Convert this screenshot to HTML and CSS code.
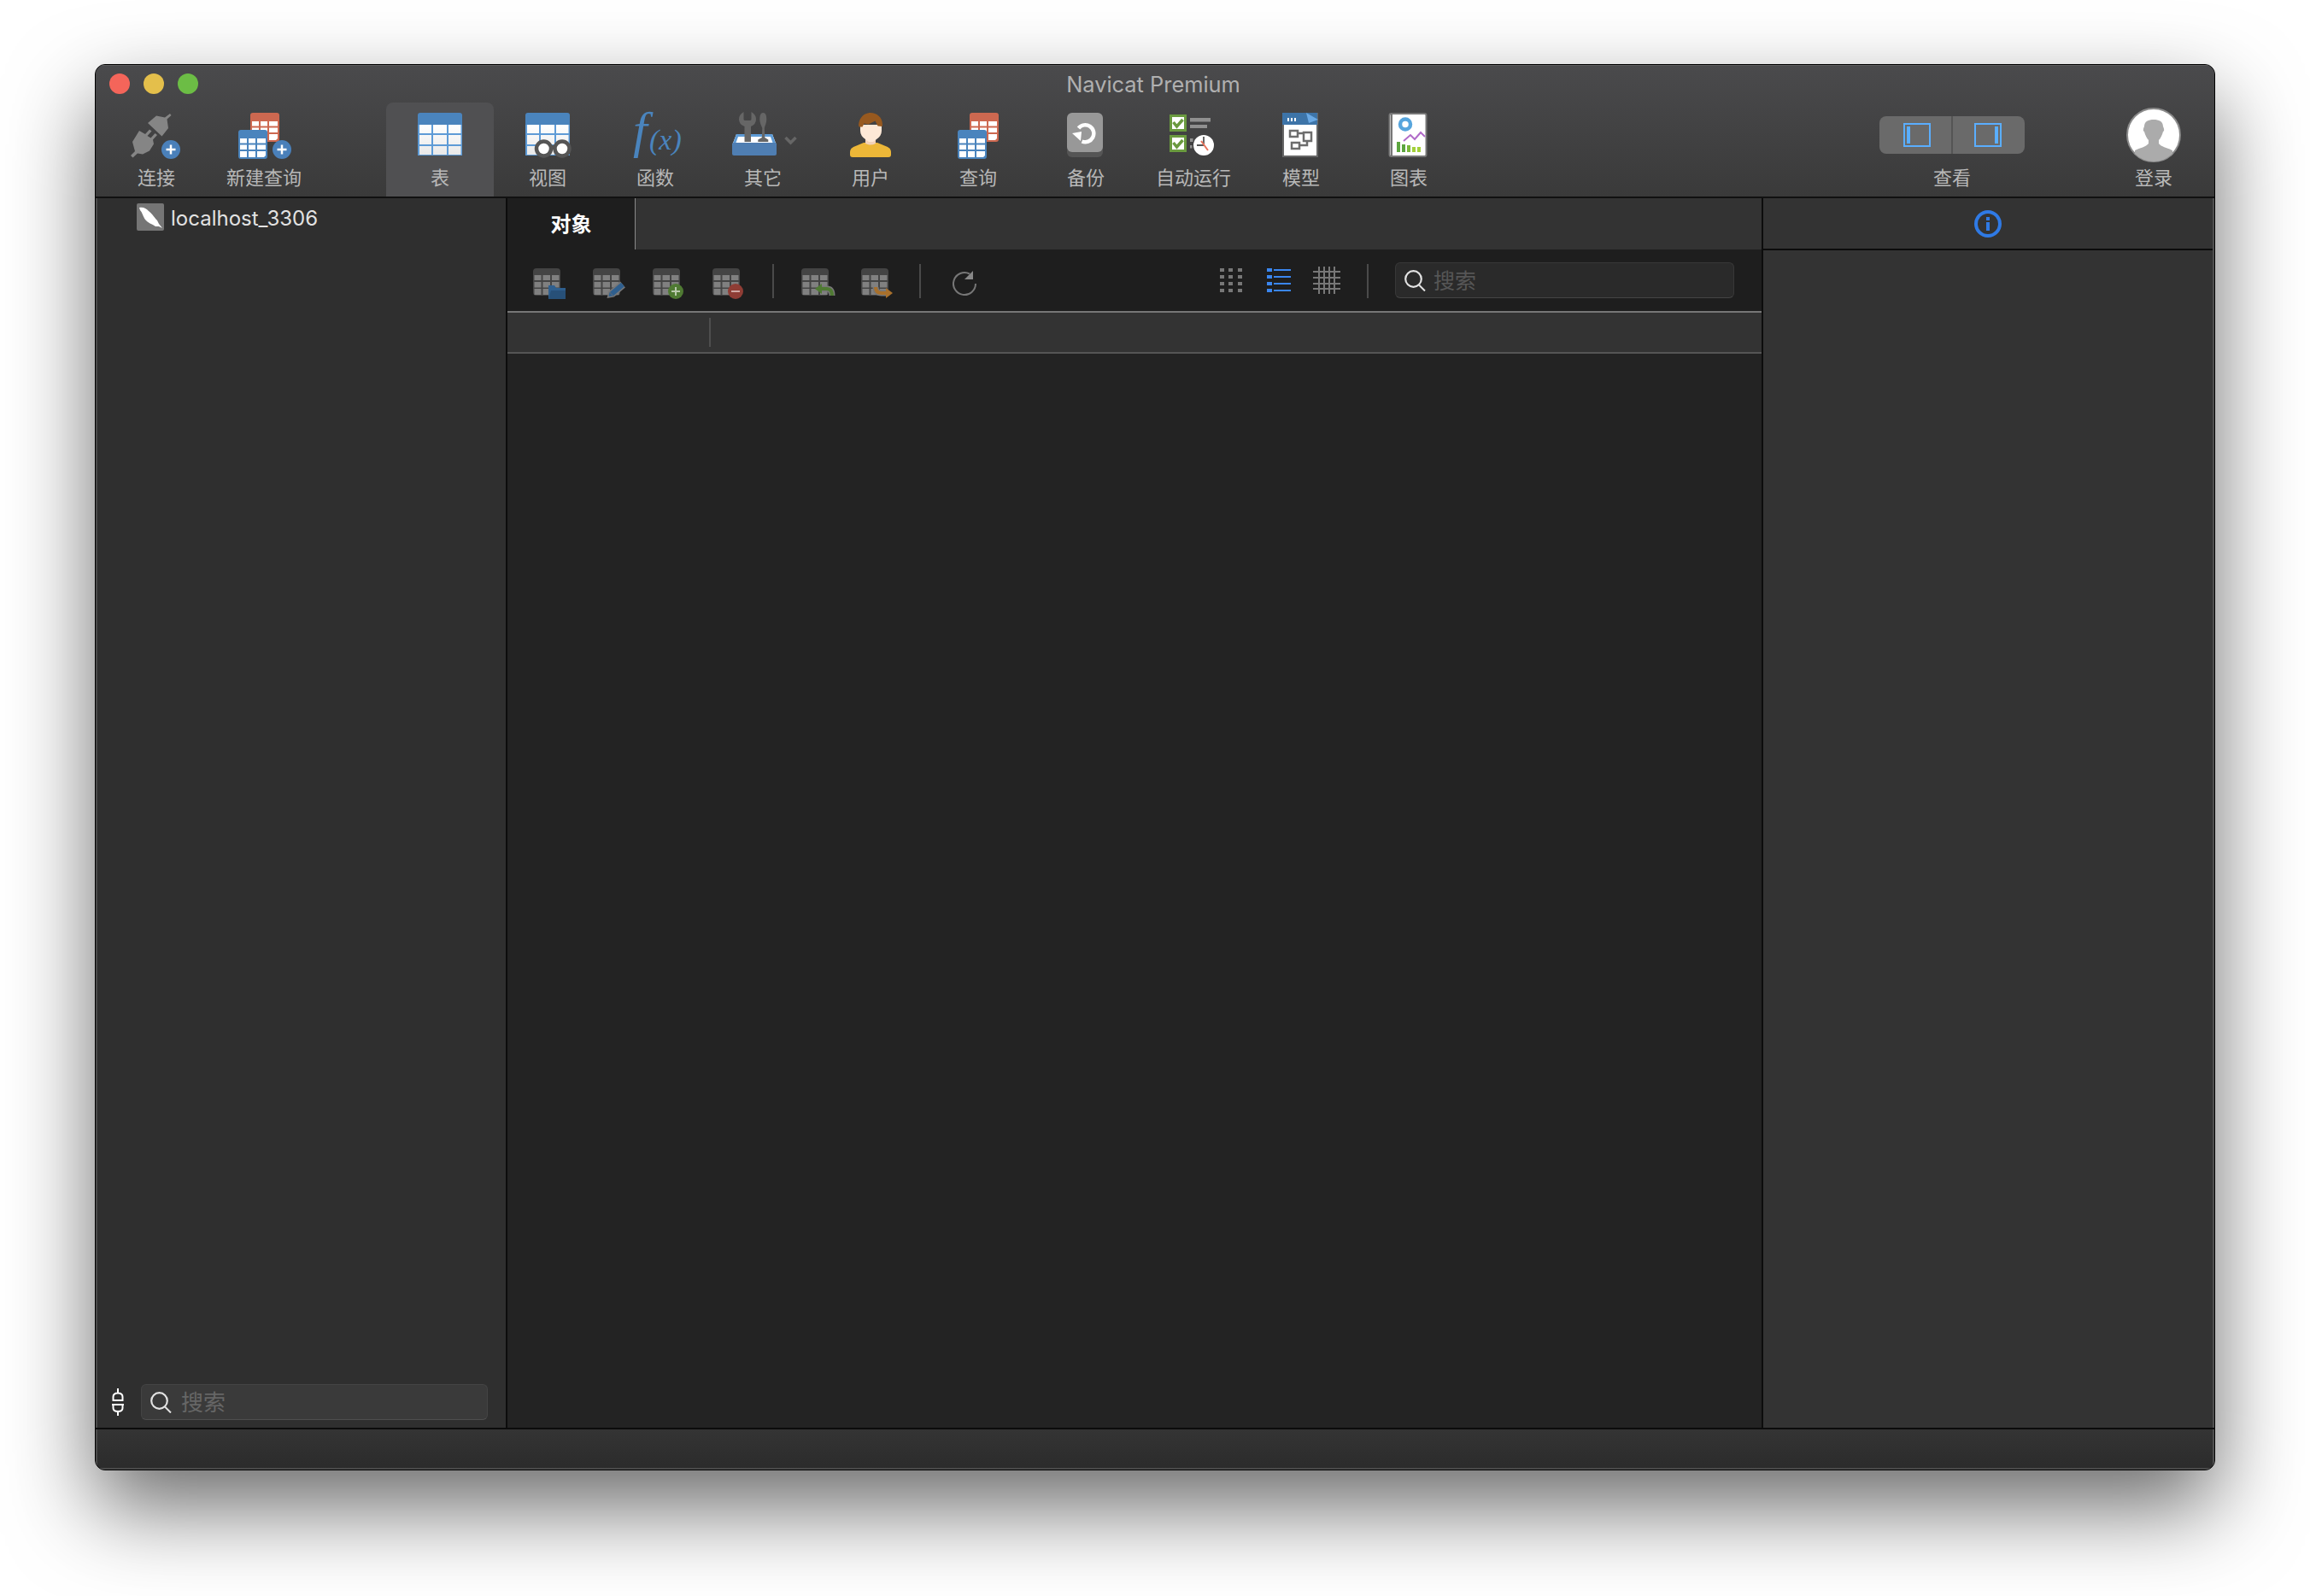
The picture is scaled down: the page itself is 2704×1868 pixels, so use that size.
FILE: index.html
```html
<!DOCTYPE html>
<html lang="zh-CN">
<head>
<meta charset="utf-8">
<title>Navicat Premium</title>
<link rel="stylesheet" href="styles.css">
</head>
<body>
<svg class="sprite" width="0" height="0">
  <defs>
    <symbol id="tbl-blue" viewBox="0 0 34 34">
      <rect width="34" height="34" rx="3" fill="#4a84bd"/>
      <path fill="#fff" d="M2 10h8v5.500H2zM12 10h8v5.500h-8zM22 10h10v5.500H22zM2 17.500h8V23H2zM12 17.500h8V23h-8zM22 17.500h10V23H22zM2 25h8v7H2zM12 25h8v7h-8zM22 25h10v5l-2 2h-8z"/>
    </symbol>
    <symbol id="tbl-red" viewBox="0 0 34 34">
      <rect width="34" height="34" rx="3" fill="#cd6850"/>
      <path fill="#fff" d="M2 10h8v5.500H2zM12 10h8v5.500h-8zM22 10h10v5.500H22zM2 17.500h8V23H2zM12 17.500h8V23h-8zM22 17.500h10V23H22zM2 25h8v7H2zM12 25h8v7h-8zM22 25h10v5l-2 2h-8z"/>
    </symbol>
    <linearGradient id="cell-fade" x1="0" y1="0" x2="0" y2="1">
      <stop offset="0" stop-color="#fff"/>
      <stop offset="1" stop-color="#e9e9e9"/>
    </linearGradient>
    <symbol id="tbl-big" viewBox="0 0 52 50">
      <rect width="52" height="50" rx="3" fill="#4a84bd"/>
      <rect y="14" width="52" height="36" fill="#5e9bd6"/>
      <path fill="url(#cell-fade)" d="M2 14h14v10H2zM18 14h16v10H18zM36 14h14.500v10H36zM2 26h14v11H2zM18 26h16v11H18zM36 26h14.500v11H36zM2 39h14v10H2zM18 39h16v10H18zM36 39h14.500v10H36z"/>
    </symbol>
    <symbol id="tbl-grey" viewBox="0 0 32 32">
      <rect width="32" height="32" rx="4" fill="#444"/>
      <path fill="#808080" d="M1.500 8h8v6h-8zM11.500 8H20v6h-8.500zM22 8h8.500v6H22zM1.500 16h8v6.500h-8zM11.500 16H20v6.500h-8.500zM22 16h8.500v6.500H22zM1.500 24h8v7h-8zM11.500 24H20v7h-8.500zM22 24h8.500v7H22z"/>
    </symbol>
    <symbol id="glass" viewBox="0 0 25 25">
      <circle cx="10.500" cy="10.500" r="9.300" fill="none" stroke="#e2e2e2" stroke-width="2.200"/>
      <path d="M17 17.500l7 7" stroke="#e2e2e2" stroke-width="2" fill="none"/>
    </symbol>
  </defs>
</svg>

<div class="window">
  <header class="chrome">
    <div class="titlebar">
      <div class="lights">
        <span class="light light-red"></span>
        <span class="light light-yellow"></span>
        <span class="light light-green"></span>
      </div>
      <div class="title">Navicat Premium</div>
    </div>
    <div class="toolbar">
      <div class="tool-group">
        <div class="tool">
          <svg viewBox="133 128 100 66">
            <path fill="#858585" d="M173 144l10-8.500 10 2 6-4.500 1.500 2-5 4.500 1.500 10.500-7.500 9.500z"/>
            <path fill="#858585" d="M155 166l8-13 7 4 5-5.500 2.500 2-5 5.500 4 2.500 5-5.500 2.500 2-5 5.500 1 5-5 8-8 4-6-1-5.500 5-2.500-2.500 5-5z"/>
            <circle cx="200" cy="175" r="11" fill="#4a80ba"/>
            <path d="M200 169.500v11M194.500 175h11" stroke="#fff" stroke-width="2.500"/>
          </svg>
          <span class="tool-label">连接</span>
        </div>
        <div class="tool">
          <svg viewBox="259 128 100 66">
            <use href="#tbl-red" x="293" y="132" width="34" height="34"/>
            <use href="#tbl-blue" x="279" y="152" width="34" height="34"/>
            <circle cx="330" cy="175" r="11" fill="#4a80ba"/>
            <path d="M330 169.500v11M324.500 175h11" stroke="#fff" stroke-width="2.500"/>
          </svg>
          <span class="tool-label">新建查询</span>
        </div>
      </div>
      <div class="tool-group tool-group-main">
        <div class="tool tool-active">
          <svg viewBox="465 128 100 66">
            <use href="#tbl-big" x="489" y="132" width="52" height="50"/>
          </svg>
          <span class="tool-label">表</span>
        </div>
        <div class="tool">
          <svg viewBox="591 128 100 66">
            <use href="#tbl-big" x="615" y="132" width="52" height="50"/>
            <rect x="644" y="170" width="6" height="5" fill="#555"/>
            <circle cx="636.500" cy="174" r="8.500" fill="#fff" stroke="#555" stroke-width="4.500"/>
            <circle cx="658" cy="174" r="8.500" fill="#fff" stroke="#555" stroke-width="4.500"/>
          </svg>
          <span class="tool-label">视图</span>
        </div>
        <div class="tool">
          <svg viewBox="717 128 100 66">
            <text class="fx-f" x="741" y="172">f</text>
            <text class="fx-x" x="760" y="175">(x)</text>
          </svg>
          <span class="tool-label">函数</span>
        </div>
        <div class="tool">
          <svg viewBox="843 128 100 66">
            <path fill="#fff" d="M862 157h42l5 13H857z"/>
            <path fill="none" stroke="#5e9bd6" stroke-width="3" d="M863 158.500h40l4 11H859z"/>
            <rect x="857" y="167" width="52" height="15" rx="2" fill="#4f7eb2"/>
            <path fill="#666" d="M870.500 131v8.500q0 1.500 2 1.500h5q2 0 2-1.500V131q5.500 3 5.500 8.500 0 6-6 8.500V166h-7.500v-18q-6.500-2.500-6.500-8.500 0-5.500 5.500-8.500z"/>
            <path fill="#666" d="M893.300 132c3 0 4 3 4 8 0 4-2 7-2.500 10l.500 11 4 2.500v2.500h-12v-2.500l4.500-2.500.500-11c-1-3-3-6-3-10 0-5 1-8 4-8z"/>
            <path fill="none" stroke="#666" stroke-width="3.500" d="M919.500 161l6 6 6-6"/>
          </svg>
          <span class="tool-label">其它</span>
        </div>
        <div class="tool">
          <svg viewBox="969 128 100 66">
            <path fill="#edb738" d="M995 178q0-4 4-6l12-5h16l12 5q4 2 4 6v3q0 3-3 3h-42q-3 0-3-3z"/>
            <path fill="#f3d2b8" d="M1013 160h12v8q-6 3-12 0z"/>
            <path fill="#fde8d6" d="M1007 146h25v7q0 6-6 10l-4 3h-5l-4-3q-6-4-6-10z"/>
            <path fill="#97591f" d="M1005 146c1-9 7-14 14-14s14 5 14 14l-.500 2-5-.500-3-6-8 4-5-1-2 4h-4z"/>
          </svg>
          <span class="tool-label">用户</span>
        </div>
        <div class="tool">
          <svg viewBox="1095 128 100 66">
            <use href="#tbl-red" x="1135" y="132" width="34" height="34"/>
            <use href="#tbl-blue" x="1121" y="152" width="34" height="34"/>
          </svg>
          <span class="tool-label">查询</span>
        </div>
        <div class="tool">
          <svg viewBox="1221 128 100 66">
            <rect x="1249" y="150" width="42" height="34" rx="6" fill="#555"/>
            <rect x="1249" y="132" width="42" height="46" rx="6" fill="#989898"/>
            <path fill="none" stroke="#fff" stroke-width="4.500" d="M1262.500 150a10 10 0 1 1 4 15.500"/>
            <path fill="#fff" d="M1255 156l11-2-1 11z"/>
          </svg>
          <span class="tool-label">备份</span>
        </div>
        <div class="tool">
          <svg viewBox="1347 128 100 66">
            <rect x="1370.500" y="135.500" width="17" height="17" fill="#fff" stroke="#6a9a3f" stroke-width="3"/>
            <path fill="none" stroke="#6a9a3f" stroke-width="3.500" d="M1373.500 143l4 5 7-8"/>
            <rect x="1370.500" y="159.500" width="17" height="17" fill="#fff" stroke="#6a9a3f" stroke-width="3"/>
            <path fill="none" stroke="#6a9a3f" stroke-width="3.500" d="M1373.500 167l4 5 7-8"/>
            <path fill="#909090" d="M1393 138h24v4.500h-24zM1393 146h20v4h-20zM1393 162h3.500v4H1393zM1393 170h2.500v3.500H1393z"/>
            <circle cx="1409" cy="170" r="12" fill="#fff"/>
            <path fill="none" stroke="#555" stroke-width="1.800" d="M1409 160v10h-8"/>
            <path fill="none" stroke="#e8735c" stroke-width="2" d="M1406 165l8 11"/>
          </svg>
          <span class="tool-label">自动运行</span>
        </div>
        <div class="tool">
          <svg viewBox="1473 128 100 66">
            <rect x="1502" y="133" width="40" height="50" fill="#fff" stroke="#666" stroke-width="2"/>
            <path fill="#3d74a8" d="M1501 132h41v14h-41z"/>
            <path fill="#6aa9e4" d="M1529 132l14 8-11 4z"/>
            <path fill="#fff" d="M1507 138h2v4h-2zM1511 138h2v4h-2zM1515 138h2v4h-2z"/>
            <path fill="none" stroke="#6d6d6d" stroke-width="2.500" d="M1510 153h9v7h-9zM1526 155h9v10h-9zM1512 167h9v7h-9zM1519 156h7M1530 165v5h-9"/>
          </svg>
          <span class="tool-label">模型</span>
        </div>
        <div class="tool">
          <svg viewBox="1599 128 100 66">
            <rect x="1626.500" y="133" width="43" height="50" rx="2" fill="#fff" stroke="#777" stroke-width="2"/>
            <rect x="1628" y="133" width="2" height="50" fill="#777"/>
            <circle cx="1645" cy="145.500" r="6" fill="none" stroke="#57a5dd" stroke-width="4.500"/>
            <path fill="none" stroke="#b06ac8" stroke-width="2" d="M1643 165l8-7 5 5 7-8 5 5"/>
            <path fill="#5ca53f" d="M1635 166h4v12h-4zM1641 169h4v9h-4z"/>
            <path fill="#7ab83c" d="M1647 170h4v8h-4z"/>
            <path fill="#a3d13a" d="M1653 172h4v6h-4zM1659 172h4v6h-4z"/>
          </svg>
          <span class="tool-label">图表</span>
        </div>
      </div>
      <div class="tool-group tool-group-right">
        <div class="tool tool-view">
          <div class="segment">
            <div class="segment-part segment-left">
              <svg viewBox="0 0 32 28" width="32" height="28"><rect x="1" y="1" width="30" height="26" fill="none" stroke="#5aaeff" stroke-width="2"/><rect x="4" y="4" width="4" height="20" fill="#5aaeff"/></svg>
            </div>
            <div class="segment-part segment-right">
              <svg viewBox="0 0 32 28" width="32" height="28"><rect x="1" y="1" width="30" height="26" fill="none" stroke="#5aaeff" stroke-width="2"/><rect x="24" y="4" width="4" height="20" fill="#5aaeff"/></svg>
            </div>
          </div>
          <span class="tool-label">查看</span>
        </div>
        <div class="tool tool-login">
          <svg viewBox="2485 128 72 66">
            <clipPath id="avatar-clip"><circle cx="2521" cy="158" r="31"/></clipPath>
            <circle cx="2521" cy="158" r="31" fill="#fff" stroke="#8a8a8a" stroke-width="2"/>
            <g clip-path="url(#avatar-clip)" fill="#ababab">
              <path d="M2510 148c0-6 5-8 11-8s11 2 11 8c1 2 2 5 0 6-1 4-3 8-5 10v4c3 4 10 5 16 8v16h-44v-16c6-3 13-4 16-8v-4c-2-2-4-6-5-10-2-1-1-4 0-6z"/>
            </g>
          </svg>
          <span class="tool-label">登录</span>
        </div>
      </div>
    </div>
  </header>

  <main class="workspace">
    <aside class="sidebar">
      <div class="tree-row">
        <svg class="tree-icon" viewBox="0 0 32 32" width="32" height="32">
          <rect width="32" height="32" rx="2" fill="#757575"/>
          <path fill="#fff" d="M3 5c5-1 8 1 11 4 4 3 7 8 10 11l2 4 4 5-4-2h-4c-4-3-9-4-12-8-3-4-3-8-6-11z"/>
        </svg>
        <span class="tree-label">localhost_3306</span>
      </div>
      <div class="sidebar-foot">
        <svg class="plug-icon" viewBox="0 0 14 32" width="14" height="32">
          <path fill="none" stroke="#fff" stroke-width="2" d="M7 0v5M1.500 14V10q0-4.500 5.500-4.500T12.500 10v4zM1 14h12M1.500 19h11v4q0 4-5.500 4t-5.500-4zM7 27v5M0 19h14"/>
        </svg>
        <div class="search search-side">
          <svg viewBox="0 0 25 25" width="25" height="25"><use href="#glass"/></svg>
          <span class="search-hint">搜索</span>
        </div>
      </div>
    </aside>

    <section class="center">
      <div class="tabs">
        <div class="tab">对象</div>
      </div>
      <div class="obj-toolbar">
        <svg class="obj-btn" viewBox="0 0 44 44">
          <use href="#tbl-grey" y="4" width="32" height="32"/>
          <path fill="#2f5f8e" d="M18 24h7l2 3h11v13H18z"/>
          <path fill="#275078" d="M21 30h17v10H18z"/>
        </svg>
        <svg class="obj-btn" viewBox="0 0 44 44">
          <use href="#tbl-grey" y="4" width="32" height="32"/>
          <path fill="none" stroke="#777" stroke-width="9" d="M22 34l13-11"/>
          <path fill="#777" d="M16.500 39l2-9 6.500 7.500z"/>
          <path fill="none" stroke="#2f5f8e" stroke-width="6" d="M22 34l13-11"/>
          <path fill="#2f5f8e" d="M18.500 37l1-5 4 4.500z"/>
        </svg>
        <svg class="obj-btn" viewBox="0 0 44 44">
          <use href="#tbl-grey" y="4" width="32" height="32"/>
          <circle cx="27" cy="31" r="9" fill="#4f7a33"/>
          <path d="M27 26v10M22 31h10" stroke="#b9c9ac" stroke-width="2"/>
        </svg>
        <svg class="obj-btn" viewBox="0 0 44 44">
          <use href="#tbl-grey" y="4" width="32" height="32"/>
          <circle cx="27" cy="31" r="9" fill="#8f3d35"/>
          <path d="M22 31h10" stroke="#d0a8a3" stroke-width="2"/>
        </svg>
        <span class="vsep vsep-a"></span>
        <svg class="obj-btn obj-btn-after" viewBox="0 0 44 44">
          <use href="#tbl-grey" y="4" width="32" height="32"/>
          <path fill="none" stroke="#777" stroke-width="7" d="M24 28h6q6 0 6 8"/>
          <path fill="none" stroke="#4f7a33" stroke-width="4" d="M24 28h6q6 0 6 8"/>
          <path fill="#4f7a33" d="M16 28l8-6v12z"/>
        </svg>
        <svg class="obj-btn" viewBox="0 0 44 44">
          <use href="#tbl-grey" y="4" width="32" height="32"/>
          <path fill="none" stroke="#777" stroke-width="7" d="M17 26q0 7 7 7h6"/>
          <path fill="none" stroke="#a8702c" stroke-width="4" d="M17 26q0 7 7 7h6"/>
          <path fill="#a8702c" d="M37 33l-8 6V27z"/>
        </svg>
        <span class="vsep vsep-b"></span>
        <svg class="obj-refresh" viewBox="0 0 32 32" width="32" height="32">
          <path fill="none" stroke="#777" stroke-width="2" d="M22 5.500a13 13 0 1 0 7 11.500"/>
          <path fill="#888" d="M26 2v10H16z"/>
        </svg>
        <div class="obj-right">
          <svg class="view-dots" viewBox="0 0 26 28" width="26" height="28">
            <path fill="#777" d="M0 0h5v4H0zM10 0h5v4h-5zM21 0h5v4h-5zM0 8h5v4H0zM10 8h5v4h-5zM21 8h5v4h-5zM0 16h5v4H0zM10 16h5v4h-5zM21 16h5v4h-5zM0 24h5v4H0zM10 24h5v4h-5zM21 24h5v4h-5z"/>
          </svg>
          <svg class="view-list" viewBox="0 0 28 28" width="28" height="28">
            <path fill="#3a86ef" d="M0 0h6v4H0zM8 1h20v2H8zM0 8h6v4H0zM8 9h20v2H8zM0 16h6v4H0zM8 17h20v2H8zM0 24h6v4H0zM8 25h20v2H8z"/>
          </svg>
          <svg class="view-grid" viewBox="0 0 32 32" width="32" height="32">
            <path stroke="#777" stroke-width="2" d="M7 0v32M13 0v32M19 0v32M25 0v32M0 6h32M0 13h32M0 20h32M0 26h32"/>
          </svg>
          <span class="vsep vsep-c"></span>
          <div class="search search-obj">
            <svg viewBox="0 0 25 25" width="25" height="25"><use href="#glass"/></svg>
            <span class="search-hint">搜索</span>
          </div>
        </div>
      </div>
      <div class="list-head">
        <span class="list-col"></span>
      </div>
      <div class="list-body"></div>
    </section>

    <aside class="inspector">
      <div class="inspector-head">
        <svg viewBox="0 0 32 32" width="32" height="32">
          <circle cx="16" cy="16" r="14" fill="none" stroke="#2f7ae5" stroke-width="4"/>
          <rect x="14" y="14" width="4" height="10" fill="#2f7ae5"/>
          <rect x="14" y="8" width="4" height="4" fill="#2f7ae5"/>
        </svg>
      </div>
    </aside>
  </main>

  <footer class="statusbar"></footer>
</div>
</body>
</html>
```
FILE: styles.css
```css
* { box-sizing: border-box; }

html, body { margin: 0; height: 100%; }

body {
  background: #fff;
  padding: 75px 0 0 111px;
  overflow: hidden;
  font-family: "Noto Sans CJK SC", "Liberation Sans", sans-serif;
}

.sprite { display: block; width: 0; height: 0; }

.window {
  width: 2482px;
  height: 1646px;
  display: flex;
  flex-direction: column;
  border: 1px solid #000;
  border-radius: 12px;
  overflow: hidden;
  box-shadow: 0 44px 100px rgba(0, 0, 0, .58);
  background: #303030;
}

/* chrome */
.chrome {
  flex: none;
  height: 156px;
  border-bottom: 2px solid #111;
  background: linear-gradient(#4a4a4c, #3a3a3a);
  box-shadow: inset 0 1px 0 #5c5c5c;
}

.titlebar {
  height: 44px;
  display: grid;
  grid-template-columns: 1fr auto 1fr;
  align-items: center;
  padding: 0 16px;
}

.lights { display: flex; gap: 16px; }

.light { width: 24px; height: 24px; border-radius: 50%; }
.light-red { background: #f4655a; }
.light-yellow { background: #e4bf4b; }
.light-green { background: #6cbd45; }

.title {
  font-family: "Inter", "Liberation Sans", sans-serif;
  font-size: 25.400px;
  color: #b0b0b0;
  transform: translateX(-2px);
}

.toolbar {
  display: flex;
  height: 110px;
  padding: 0 35px 0 8px;
}

.tool-group { display: flex; }
.tool-group-main { margin-left: 80px; }
.tool-group-right { margin-left: auto; gap: 115px; }

.tool {
  width: 126px;
  padding-top: 8px;
  display: flex;
  flex-direction: column;
  align-items: center;
}

.tool > svg {
  width: 100px;
  height: 66px;
  flex: none;
  overflow: visible;
  margin-bottom: -2px;
}

.tool-active {
  background: #505052;
  border-radius: 8px 8px 0 0;
}

.tool-label {
  font-size: 22px;
  line-height: 28px;
  color: #b8b8b8;
  white-space: nowrap;
}

.tool-view { width: 170px; }
.tool-login { width: 72px; }
.tool-login > svg { width: 72px; }

.fx-f {
  font-family: "Liberation Serif", serif;
  font-style: italic;
  font-size: 60px;
  fill: #4a84bd;
}

.fx-x {
  font-family: "Liberation Serif", serif;
  font-style: italic;
  font-size: 34px;
  fill: #4a84bd;
}

.segment {
  width: 170px;
  height: 44px;
  margin: 8px 0 12px;
  display: flex;
  border-radius: 8px;
  background: #6a6a6a;
  overflow: hidden;
}

.segment-part {
  flex: 1;
  display: flex;
  align-items: center;
  justify-content: center;
}

.segment-left { padding-left: 3px; }

.segment-right {
  padding-right: 3px;
  border-left: 2px solid #555;
}

/* workspace */
.workspace {
  flex: none;
  height: 1441px;
  display: flex;
  border-bottom: 2px solid #0c0c0c;
}

.sidebar {
  flex: none;
  width: 482px;
  display: flex;
  flex-direction: column;
  justify-content: space-between;
  background: #2f2f2f;
  border-left: 2px solid #4a4a4a;
  border-right: 2px solid #0c0c0c;
}

.tree-row {
  height: 44px;
  padding: 6px 0 0 46px;
  display: flex;
  align-items: flex-start;
  gap: 8px;
}

.tree-icon { flex: none; }

.tree-label {
  font-family: "Inter", "Liberation Sans", sans-serif;
  font-size: 24px;
  line-height: 34px;
  padding-top: 1px;
  color: #e2e2e2;
}

.sidebar-foot {
  display: flex;
  align-items: center;
  padding: 0 0 9px 17px;
  gap: 20px;
}

.plug-icon { flex: none; }

.search {
  display: flex;
  align-items: center;
  height: 42px;
  border-radius: 6px;
}

.search-side {
  width: 406px;
  padding-left: 10px;
  gap: 11px;
  background: #3a3a3a;
  border: 1px solid #444;
  border-bottom-color: #4e4e4e;
}

.search-obj {
  width: 397px;
  padding-left: 10px;
  gap: 9px;
  background: #2a2a2a;
  border: 1px solid #383838;
  border-bottom-color: #444;
}

.search-hint {
  font-size: 26px;
  line-height: 30px;
  padding-bottom: 2px;
  color: #666;
}

.search-obj .search-hint {
  font-size: 25px;
  color: #565656;
}

/* center */
.center {
  flex: none;
  width: 1468px;
  display: flex;
  flex-direction: column;
  background: #232323;
}

.tabs {
  flex: none;
  height: 60px;
  background: #333;
}

.tab {
  width: 150px;
  height: 60px;
  padding-bottom: 4px;
  display: flex;
  align-items: center;
  justify-content: center;
  background: #1e1e1e;
  border-right: 1px solid #8a8a8a;
  font-size: 24px;
  font-weight: 700;
  color: #fff;
}

.obj-toolbar {
  flex: none;
  height: 74px;
  display: flex;
  align-items: center;
  padding: 0 32px 0 30px;
  background: #1e1e1e;
  border-bottom: 2px solid #777;
}

.obj-btn {
  flex: none;
  width: 44px;
  height: 44px;
  overflow: visible;
  margin-top: 8px;
  margin-right: 26px;
}

.vsep {
  flex: none;
  width: 2px;
  height: 40px;
  margin-top: 2px;
  background: #4a4a4a;
}

.obj-btn-after { margin-left: 32px; }
.vsep-b { margin-left: -2px; }
.obj-refresh { margin: 6px 0 0 35px; overflow: visible; }

.obj-right {
  margin-left: auto;
  display: flex;
  align-items: center;
}

.view-list { margin-left: 29px; }
.view-grid { margin-left: 26px; }
.vsep-c { margin: 2px 31px 0; }

.list-head {
  flex: none;
  height: 48px;
  padding-top: 6px;
  background: #333;
  border-bottom: 2px solid #555;
}

.list-col {
  display: block;
  width: 2px;
  height: 34px;
  margin-left: 236px;
  background: #4e4e4e;
}

.list-body { flex: 1; }

/* inspector */
.inspector {
  flex: none;
  width: 530px;
  background: #333;
  border-left: 2px solid #0c0c0c;
  border-right: 2px solid #4f4f4f;
}

.inspector-head {
  height: 61px;
  display: flex;
  align-items: center;
  justify-content: center;
  border-bottom: 2px solid #0c0c0c;
}

.statusbar {
  flex: 1;
  background: linear-gradient(#343434, #2b2b2b);
  box-shadow: inset 0 -2px 0 #4a4a4a, inset 2px 0 0 #4a4a4a, inset -2px 0 0 #4f4f4f;
}
```
